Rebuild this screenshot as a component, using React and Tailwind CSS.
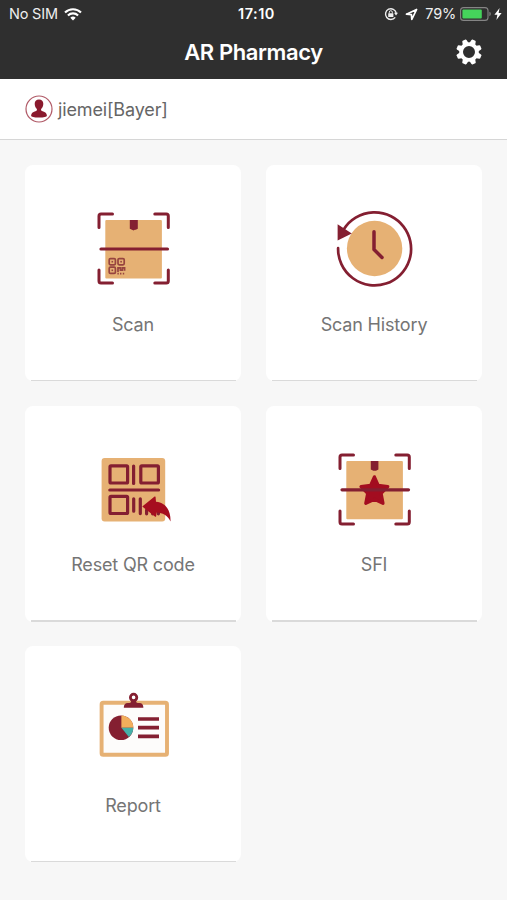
import React from 'react';

const MAROON = '#841f31';
const TAN = '#e6b174';

const ScanFrame = () => (
  <g fill="none" stroke={MAROON} strokeWidth="3" strokeLinecap="round" strokeLinejoin="round">
    <path d="M10 22.5V11a2 2 0 0 1 2-2h11.5" />
    <path d="M65.8 9h11.5a2 2 0 0 1 2 2v11.5" />
    <path d="M10 65v11a2 2 0 0 0 2 2h11.5" />
    <path d="M65.8 78h11.5a2 2 0 0 0 2-2V65" />
  </g>
);

const ScanIcon = () => (
  <svg viewBox="0 0 88 88" className="h-[88px] w-[88px]">
    <rect x="16.3" y="15" width="56.6" height="58.6" rx="1" fill={TAN} />
    <path d="M40.8 15h8v8.8l-2 1h-1l-1.2.6-3.8-1.6z" fill={MAROON} />
    <ScanFrame />
    <path d="M12 44h66.5" stroke={MAROON} strokeWidth="3.2" strokeLinecap="round" />
    <g fill="none" stroke="#97443f" strokeWidth="1.7">
      <rect x="20.2" y="53.6" width="6.2" height="6.2" rx="1.2" />
      <rect x="29" y="53.6" width="6.2" height="6.2" rx="1.2" />
      <rect x="20.2" y="62.2" width="6.2" height="6.2" rx="1.2" />
      <path d="M29 67v-4.2h2.4v2.4h2v-2.4h2.2v3M28.4 68.6h1.4M31 68.6h1.4M33.8 68.6h1.4" strokeWidth="1.7" />
    </g>
    <g fill="#97443f">
      <rect x="22.5" y="55.9" width="1.6" height="1.6" />
      <rect x="31.3" y="55.9" width="1.6" height="1.6" />
      <rect x="22.5" y="64.5" width="1.6" height="1.6" />
    </g>
  </svg>
);

const HistoryIcon = () => (
  <svg viewBox="0 0 88 88" className="h-[88px] w-[88px]">
    <circle cx="44.6" cy="43.5" r="27.7" fill={TAN} />
    <path
      d="M8.1 43.2A36.5 36.5 0 1 0 14 24"
      fill="none"
      stroke={MAROON}
      strokeWidth="2.7"
      strokeLinecap="round"
    />
    <path d="M7.6 19.2v16.4l14.2-7.2z" fill={MAROON} />
    <path
      d="M44 26.8V44.5l8 8"
      fill="none"
      stroke={MAROON}
      strokeWidth="3.5"
      strokeLinecap="round"
      strokeLinejoin="round"
    />
  </svg>
);

const ResetIcon = () => (
  <svg viewBox="0 0 88 88" className="h-[88px] w-[88px]">
    <rect x="12.6" y="12" width="63.6" height="63.6" rx="3" fill={TAN} />
    <g fill="none" stroke={MAROON} strokeWidth="3.2" strokeLinecap="round">
      <rect x="21" y="19.8" width="17.6" height="17.2" rx="1" />
      <rect x="51.8" y="19.8" width="17.6" height="17.2" rx="1" />
      <rect x="21" y="50.3" width="17.6" height="17.2" rx="1" />
      <path d="M44.6 20v17.4" />
      <path d="M20.8 44h48.8" />
      <path d="M44.7 52.8v12.4M51.3 52.8v14.8M57.6 64v3.8M63.6 64v3.8M69.4 62v5.8" />
    </g>
    <path
      d="M53.3 60.6 65.6 50.6q1-.5 1 .6l.4 4.6c9.2.8 14.9 8 14.5 19.6-2.8-6-8-8.7-13.8-8.9l-.6 3.9q-.3.8-1.2.2z"
      fill="#a60d1f"
    />
  </svg>
);

const SfiIcon = () => (
  <svg viewBox="0 0 88 88" className="h-[88px] w-[88px]">
    <rect x="16.3" y="15" width="56.6" height="58.3" rx="1" fill={TAN} />
    <path d="M40.8 15h7.6v8.6l-2.4 1.2h-2.6l-2.6-1.2z" fill={MAROON} />
    <ScanFrame />
    <path
      d="M44.4 30.8l3.8 8.6 9.6 1.2-6.7 6.8 1.9 10-8.6-4.2-8.6 4.2 1.9-10-6.7-6.8 9.6-1.2z"
      fill="#a30d20"
      stroke="#a30d20"
      strokeWidth="3.2"
      strokeLinejoin="round"
    />
    <path d="M12 43.8h66.5" stroke={MAROON} strokeWidth="3.2" strokeLinecap="round" />
  </svg>
);

const ReportIcon = () => (
  <svg viewBox="0 0 88 88" className="h-[88px] w-[88px]">
    <rect x="12.6" y="16.8" width="65.4" height="52" rx="1.6" fill="#fdfcfb" stroke={TAN} strokeWidth="3.9" />
    <circle cx="44.6" cy="11.4" r="3.2" fill="none" stroke={MAROON} strokeWidth="2.8" />
    <path
      d="M34.8 21.8c0-3.2 1.4-4.8 4-4.8h1.6c1.2 0 1.6-.8 1.8-2H47c.2 1.2.6 2 1.8 2h1.6c2.6 0 4 1.6 4 4.8z"
      fill={MAROON}
    />
    <circle cx="32" cy="41.7" r="12.3" fill={MAROON} />
    <path d="M32.4 41.7V29.4a12.2 12.2 0 0 1 11.9 12.3z" fill="#f2ae5c" />
    <path d="M32.4 41.7h11.9c0 3.8-1.8 7-4.4 9.2z" fill="#45b0a8" />
    <path d="M49 33h21M49 41.7h21M49 50.3h21" stroke={MAROON} strokeWidth="3.7" />
  </svg>
);

const menuItems = [
  { label: 'Scan', icon: ScanIcon },
  { label: 'Scan History', icon: HistoryIcon },
  { label: 'Reset QR code', icon: ResetIcon },
  { label: 'SFI', icon: SfiIcon },
  { label: 'Report', icon: ReportIcon },
];

const MenuCard = ({ label, icon: Icon }) => (
  <button type="button" className="flex h-[216px] flex-col items-center rounded-lg bg-white pt-10">
    <Icon />
    <span className="mt-[17.5px] text-[18px] leading-7 tracking-[-0.17px] text-[#757575]">{label}</span>
    <span className="mt-auto h-[1.5px] w-[205px] bg-[#dadada]"></span>
  </button>
);

const WifiIcon = () => (
  <svg viewBox="0 0 18 13" className="ml-[6px] h-[13px] w-[18px]" fill="none" stroke="#fff" strokeWidth="2.1">
    <path d="M1 4.6a11.4 11.4 0 0 1 16 0" />
    <path d="M3.9 7.5a7.3 7.3 0 0 1 10.2 0" />
    <path d="M9 12.4 6.3 9.7a3.9 3.9 0 0 1 5.4 0z" fill="#fff" stroke="none" />
  </svg>
);

const StatusBar = () => (
  <div className="grid h-7 grid-cols-[1fr_auto_1fr] items-center text-[14.5px] text-[#eeeeee]">
    <div className="flex items-center pl-[9px]">
      <span className="tracking-[-0.2px]">No SIM</span>
      <WifiIcon />
    </div>
    <span className="pl-[6px] text-[14.5px] font-semibold tracking-[0.5px] text-white">17:10</span>
    <div className="flex items-center justify-end pr-[5px]">
      <svg viewBox="0 0 14 14" className="mr-[7px] h-[14px] w-[14px]" fill="none" stroke="#eee" strokeWidth="1.4">
        <path d="M11.2 10.4A5.4 5.4 0 1 1 12.2 6" />
        <path d="M10 5.8h4l-2 2.8z" fill="#eee" stroke="none" />
        <rect x="4.2" y="6.2" width="5.2" height="3.8" rx=".5" fill="#eee" stroke="none" />
        <path d="M5.3 6.4V5.2a1.5 1.5 0 0 1 3 0v1.2" strokeWidth="1" />
      </svg>
      <svg
        viewBox="0 0 13 13"
        className="mr-[7px] h-[13px] w-[13px]"
        fill="none"
        stroke="#fff"
        strokeWidth="1.7"
        strokeLinejoin="round"
      >
        <path d="M11.6 1.4 1.4 6.2l5 .4.4 4.9z" />
      </svg>
      <span className="tracking-[-0.2px]">79%</span>
      <svg viewBox="0 0 32 14" className="ml-1 h-[14px] w-[32px]">
        <rect x=".6" y=".6" width="27.4" height="12.8" rx="3" fill="none" stroke="#858585" strokeWidth="1.1" />
        <rect x="2.4" y="2.4" width="19.4" height="9.2" rx="1" fill="#45d35b" />
        <path d="M29.4 4.8a2.4 2.4 0 0 1 0 4.4z" fill="#858585" />
      </svg>
      <svg viewBox="0 0 8 12" className="ml-[2px] h-3 w-2">
        <path d="M5.6 0 .4 6.8h3L2.4 12l5.2-7H4.6z" fill="#fff" />
      </svg>
    </div>
  </div>
);

const GearIcon = () => (
  <svg viewBox="-13 -13 26 26" className="h-[26px] w-[26px]">
    <g fill="#fff">
      {[22.5, 67.5, 112.5, 157.5, 202.5, 247.5, 292.5, 337.5].map((deg) => (
        <path key={deg} d="M-3.2-8-2.3-12q.2-.8.8-.8h3q.6 0 .8.8l.9 4z" transform={`rotate(${deg})`} />
      ))}
    </g>
    <circle r="7.9" fill="none" stroke="#fff" strokeWidth="3.8" />
  </svg>
);

const App = () => {
  return (
    <div className="min-h-[900px] w-full bg-[#f7f7f7] font-['Inter','Liberation_Sans',sans-serif]">
      <header className="h-[79px] bg-[#2f2f2f]">
        <StatusBar />
        <div className="grid h-12 grid-cols-[1fr_auto_1fr] items-center">
          <h1 className="col-start-2 text-[22px] font-semibold leading-7 tracking-[-0.4px] text-white">AR Pharmacy</h1>
          <button type="button" className="justify-self-end pr-[25px]">
            <GearIcon />
          </button>
        </div>
      </header>

      <div className="flex h-[61px] items-center border-b border-[#d6d6d6] bg-white pl-[25px]">
        <svg viewBox="0 0 28 28" className="h-7 w-7">
          <circle cx="14" cy="14" r="13" fill="#fff" stroke="#b05966" strokeWidth="1.2" />
          <path
            d="M14 4.4c-2.8 0-4.3 1.8-4.3 4.4 0 2.2.8 4 2.2 5.2.2 1.2-.2 1.8-1.6 2.3-2.6.9-4 1.9-4.2 4.2 0 1.4 3 2.1 7.9 2.1s7.9-.7 7.9-2.1c-.2-2.3-1.6-3.3-4.2-4.2-1.4-.5-1.8-1.1-1.6-2.3 1.4-1.2 2.2-3 2.2-5.2 0-2.6-1.5-4.4-4.3-4.4z"
            fill="#8a1a2e"
          />
        </svg>
        <span className="ml-[5px] pt-[2px] text-[18px] leading-7 tracking-[-0.15px] text-[#666666]">jiemei[Bayer]</span>
      </div>

      <main className="grid grid-cols-[216px_216px] gap-x-[25px] gap-y-[24.5px] px-[25px] pt-[25px]">
        {menuItems.map((item) => (
          <MenuCard key={item.label} {...item} />
        ))}
      </main>
    </div>
  );
};

export default App;
